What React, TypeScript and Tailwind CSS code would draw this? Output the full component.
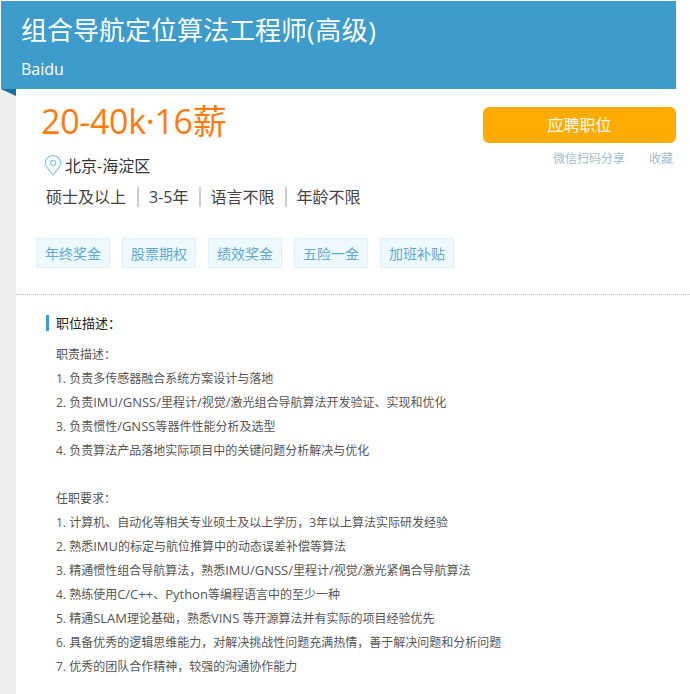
const font = "font-['Segoe_UI','Open_Sans','Noto_Sans_CJK_SC',sans-serif]";

const tags = ["年终奖金", "股票期权", "绩效奖金", "五险一金", "加班补贴"];
const facts = ["硕士及以上", "3-5年", "语言不限", "年龄不限"];
const duties = [
  "职责描述\uFF1A",
  "1. 负责多传感器融合系统方案设计与落地",
  "2. 负责IMU/GNSS/里程计/视觉/激光组合导航算法开发验证、实现和优化",
  "3. 负责惯性/GNSS等器件性能分析及选型",
  "4. 负责算法产品落地实际项目中的关键问题分析解决与优化",
];
const reqs = [
  "任职要求\uFF1A",
  "1. 计算机、自动化等相关专业硕士及以上学历\uFF0C3年以上算法实际研发经验",
  "2. 熟悉IMU的标定与航位推算中的动态误差补偿等算法",
  "3. 精通惯性组合导航算法\uFF0C熟悉IMU/GNSS/里程计/视觉/激光紧偶合导航算法",
  "4. 熟练使用C/C++、Python等编程语言中的至少一种",
  "5. 精通SLAM理论基础\uFF0C熟悉VINS 等开源算法并有实际的项目经验优先",
  "6. 具备优秀的逻辑思维能力\uFF0C对解决挑战性问题充满热情\uFF0C善于解决问题和分析问题",
  "7. 优秀的团队合作精神\uFF0C较强的沟通协作能力",
];

function Line({ text }: { text: string }) {
  const parts = text.split(/([A-Za-z/+]+)/);
  return (
    <p className="h-[24px] whitespace-nowrap">
      {parts.map((p, i) =>
        i % 2 === 1 ? <span key={i} className="text-[13px] leading-none">{p}</span> : <span key={i}>{p}</span>
      )}
    </p>
  );
}

export default function App() {
  return (
    <div className={`${font} w-[690px] h-[694px] overflow-hidden bg-white flex flex-col`}>
      <header className="mt-px ml-px mr-[14px] h-[88px] bg-[#3d9ccc] pl-[20px] pt-[11px] text-white shrink-0">
        <h1 className="text-[26px] leading-[36px] font-normal">组合导航定位算法工程师<span className="tracking-[0.5px]">(高级)</span></h1>
        <p className="mt-[11px] text-[16px] leading-[20px]">Baidu</p>
      </header>
      <div className="flex flex-1 min-h-0">
        <aside className="w-[16px] bg-[#eeeeee] shrink-0">
          <svg width="16" height="7" viewBox="0 0 16 7" className="block">
            <polygon points="1,0 16,0 16,7" fill="#1b6f9e" />
          </svg>
        </aside>
        <main className="flex-1 min-w-0">
          <section className="flex justify-between pl-[25px] pr-[14px] pt-[9px]">
            <div>
              <div className="text-[34px] leading-[46px] tracking-[-0.3px] text-[#ff7a0f]">20-40k·16薪</div>
              <div className="mt-[10px] ml-[4px] flex items-center gap-[3px] text-[16px] leading-[24px] text-[#333]">
                <svg width="18" height="21" viewBox="0 0 18 21" fill="none" stroke="#8cc8e6" strokeWidth="1.2" className="-ml-[1px] -mt-[1px]">
                  <path d="M9 20 C6.5 16 1.2 12 1.2 8 A7.8 7.4 0 0 1 16.8 8 C16.8 12 11.5 16 9 20 Z" />
                  <circle cx="9" cy="8" r="2.7" />
                </svg>
                <span>北京-海淀区</span>
              </div>
              <div className="mt-[9px] ml-[5px] flex items-center text-[16px] leading-[20px] text-[#444]">
                {facts.map((f, i) => (
                  <span key={f} className={i === 0 ? "pr-[11px] mr-[10px] border-r-2 border-[#ccc]" : i < facts.length - 1 ? "pr-[11px] mr-[9px] border-r-2 border-[#ccc]" : ""}>{f}</span>
                ))}
              </div>
            </div>
            <div className="w-[193px] pt-[9px]">
              <button className="block w-full h-[36px] rounded-[6px] bg-[#ffab00] text-[16px] text-white">应聘职位</button>
              <div className="mt-[7px] flex justify-end gap-[24px] pr-[3px] text-[12px] leading-[18px] text-[#a3bccb]">
                <span>微信扫码分享</span>
                <span>收藏</span>
              </div>
            </div>
          </section>
          <ul className="mt-[31px] ml-[20px] flex gap-[12px]">
            {tags.map((t) => (
              <li key={t} className="w-[74px] h-[30px] flex items-center justify-center bg-[#edf8ff] border border-[#e0f0fa] text-[14px] text-[#5ea8d3]">{t}</li>
            ))}
          </ul>
          <div className="mt-[26px] border-t border-dotted border-[#bbb]" />
          <section className="pl-[30px] pt-[20px] text-[12px] leading-[24px] text-[#555]">
            <h2 className="border-l-[3px] border-[#3d9ccc] pl-[7px] text-[13px] leading-[16px] font-normal text-[#222] mb-[12px]">职位描述{"\uFF1A"}</h2>
            <div className="pl-[10px]">
              {duties.map((l) => <Line key={l} text={l} />)}
              <div className="h-[24px]" />
              {reqs.map((l) => <Line key={l} text={l} />)}
            </div>
          </section>
        </main>
      </div>
    </div>
  );
}
